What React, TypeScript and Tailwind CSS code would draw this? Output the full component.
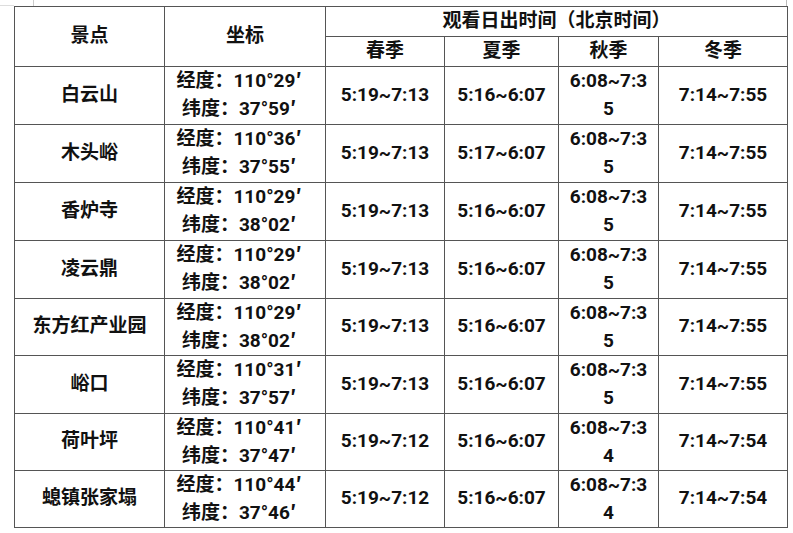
import React from "react";

const rows = [
  ["白云山", "110°29", "37°59", "5:19~7:13", "5:16~6:07", "5", "7:14~7:55"],
  ["木头峪", "110°36", "37°55", "5:19~7:13", "5:17~6:07", "5", "7:14~7:55"],
  ["香炉寺", "110°29", "38°02", "5:19~7:13", "5:16~6:07", "5", "7:14~7:55"],
  ["凌云鼎", "110°29", "38°02", "5:19~7:13", "5:16~6:07", "5", "7:14~7:55"],
  ["东方红产业园", "110°29", "38°02", "5:19~7:13", "5:16~6:07", "5", "7:14~7:55"],
  ["峪口", "110°31", "37°57", "5:19~7:13", "5:16~6:07", "5", "7:14~7:55"],
  ["荷叶坪", "110°41", "37°47", "5:19~7:12", "5:16~6:07", "4", "7:14~7:54"],
  ["螅镇张家塌", "110°44", "37°46", "5:19~7:12", "5:16~6:07", "4", "7:14~7:54"],
];

const heights = ["h-[58px]", "h-[58px]", "h-[58px]", "h-[58px]", "h-[57px]", "h-[58px]", "h-[57px]", "h-[57px]"];

export default function App() {
  const cell = "border border-[#555] text-center align-middle p-0";
  return (
    <div className="w-[793px] h-[533px] bg-white relative text-[#111] font-bold text-[19px]" style={{ fontFamily: "Roboto, 'Noto Sans CJK SC', sans-serif" }}>
      <div className="absolute left-[33px] top-0 w-px h-[6px] bg-[#ccc]" />
      <div className="absolute left-0 top-[5px] w-[14px] h-px bg-[#ddd]" />
      <div className="absolute left-[786px] top-0 w-px h-[6px] bg-[#bbb]" />
      <div className="pt-[6px] pl-[14px]">
        <table className="border-collapse table-fixed w-[773px] border border-[#777]">
          <colgroup>
            <col className="w-[150px]" />
            <col className="w-[161px]" />
            <col className="w-[119px]" />
            <col className="w-[114px]" />
            <col className="w-[100px]" />
            <col className="w-[129px]" />
          </colgroup>
          <thead>
            <tr className="h-[30px]">
              <th rowSpan={2} className={cell + " font-bold"}>景点</th>
              <th rowSpan={2} className={cell + " font-bold"}>坐标</th>
              <th colSpan={4} className={cell + " font-bold"}>观看日出时间（北京时间）</th>
            </tr>
            <tr className="h-[28px]">
              <th className={cell + " font-bold"}>春季</th>
              <th className={cell + " font-bold"}>夏季</th>
              <th className={cell + " font-bold"}>秋季</th>
              <th className={cell + " font-bold"}>冬季</th>
            </tr>
          </thead>
          <tbody>
            {rows.map((r, i) => (
              <tr key={i} className={heights[i]}>
                <td className={cell}>{r[0]}</td>
                <td className={cell + " pr-[12px]"}>
                  <div className="h-[28px] leading-[28px] whitespace-nowrap">
                    经度：{r[1]}
                    <span className="font-['Noto_Sans_CJK_SC'] leading-none">′</span>
                  </div>
                  <div className="h-[28px] leading-[28px] whitespace-nowrap">
                    纬度：{r[2]}
                    <span className="font-['Noto_Sans_CJK_SC'] leading-none">′</span>
                  </div>
                </td>
                <td className={cell}>{r[3]}</td>
                <td className={cell}>{r[4]}</td>
                <td className={cell + " leading-[28px]"}>
                  <div>6:08~7:3</div>
                  <div>{r[5]}</div>
                </td>
                <td className={cell}>{r[6]}</td>
              </tr>
            ))}
          </tbody>
        </table>
      </div>
    </div>
  );
}
